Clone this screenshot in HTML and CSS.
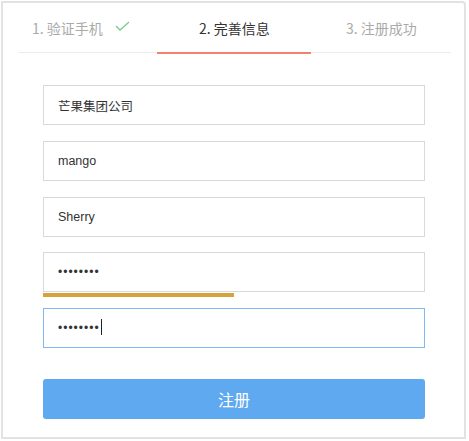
FILE: index.html
```html
<!DOCTYPE html>
<html lang="zh-CN">
<head>
<meta charset="utf-8">
<title>注册</title>
<link rel="stylesheet" href="styles.css">
</head>
<body>
<div class="card">
  <nav class="steps">
    <div class="step step-done">
      <span>1. 验证手机</span>
      <svg class="check" width="15" height="10" viewBox="0 0 15 10"><path d="M1 5 L5 9 L14 1" fill="none" stroke="#7ccb8c" stroke-width="1.3"/></svg>
    </div>
    <div class="step step-active"><span>2. 完善信息</span></div>
    <div class="step step-todo"><span>3. 注册成功</span></div>
  </nav>
  <form class="form">
    <input class="field field-first" type="text" value="芒果集团公司">
    <input class="field" type="text" value="mango">
    <input class="field" type="text" value="Sherry">
    <div class="pw-group">
      <input class="field" type="password" value="12345678">
      <div class="strength"><div class="strength-fill" style="width:50%"></div></div>
    </div>
    <div class="confirm-wrap">
      <input class="field field-focus" type="password" value="12345678">
      <span class="caret"></span>
    </div>
    <button class="submit" type="button">注册</button>
  </form>
</div>
</body>
</html>
```
FILE: styles.css
```css
* { box-sizing: border-box; }
html, body { margin: 0; padding: 0; background: #fff; }
body {
  font-family: "Liberation Sans", "Noto Sans CJK SC", sans-serif;
}
.card {
  margin: 1px 0 0 1px;
  width: 465px;
  height: 438px;
  border: 2px solid #e2e2e2;
  border-top-right-radius: 4px;
  padding: 0 13px 0 15px;
}
.steps {
  display: flex;
  height: 50px;
  border-bottom: 1px solid #ececec;
  font-family: "Noto Sans CJK SC", sans-serif;
  font-size: 14px;
}
.step {
  position: relative;
  display: flex;
  align-items: center;
  height: 49px;
  color: #aaa;
}
.step-done { width: 139px; padding-left: 14px; }
.step-active { width: 154px; padding-left: 42px; color: #333; }
.step-todo { flex: 1; padding-left: 35px; }
.step-active::after {
  content: "";
  position: absolute;
  left: 0; right: 0; bottom: -2px;
  height: 2px;
  background: #f2806f;
}
.check { margin-left: 12px; margin-top: -4px; }
.form {
  display: flex;
  flex-direction: column;
  width: 382px;
  margin: 32px 0 0 25px;
}
.field {
  display: block;
  width: 100%;
  height: 40px;
  border: 1px solid #d9d9d9;
  padding: 0 14px;
  font-family: "Liberation Sans", "Noto Sans CJK SC", sans-serif;
  font-size: 12.5px;
  color: #333;
  outline: none;
  margin: 0;
  background: #fff;
}
.field + .field { margin-top: 16px; }
.field[type="password"] { letter-spacing: 1px; font-size: 12px; }
.pw-group { margin-top: 15px; }
.strength { height: 4px; margin-top: 1px; }
.strength-fill { height: 4px; background: #d5a33b; }
.confirm-wrap { position: relative; margin-top: 11px; }
.field-focus { border-color: #7fb7f0; caret-color: transparent; }
.caret {
  position: absolute;
  left: 58px;
  top: 11px;
  width: 1px;
  height: 16px;
  background: #222;
}
.submit {
  margin-top: 31px;
  height: 40px;
  border: 0;
  border-radius: 3px;
  background: #5fa9f0;
  color: #fff;
  font-family: "Noto Sans CJK SC", sans-serif;
  font-size: 16px;
}
```
